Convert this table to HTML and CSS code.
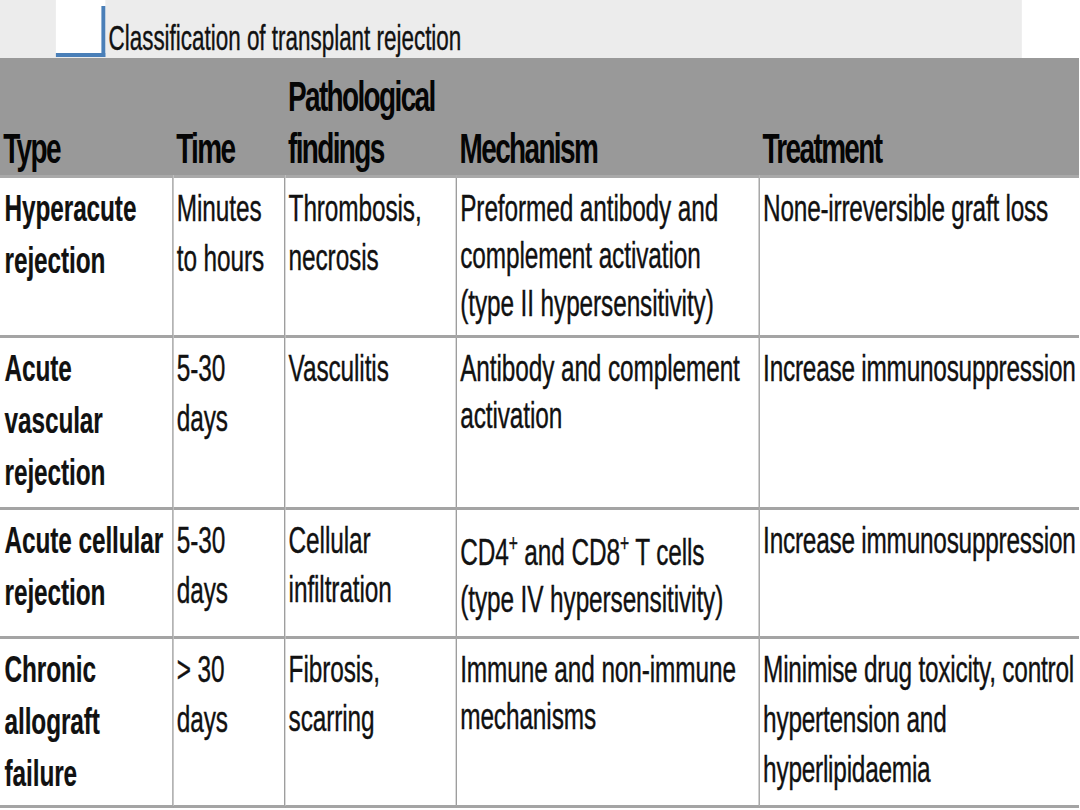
FILE: index.html
```html
<!DOCTYPE html>
<html lang="en">
<head>
<meta charset="utf-8">
<title>Classification of transplant rejection</title>
<link rel="stylesheet" href="styles.css">
</head>
<body>
<div class="page">
  <div class="topbar">
    <div class="tab"></div>
    <div class="title">Classification of transplant rejection</div>
  </div>
  <table class="grid">
    <colgroup>
      <col class="c-type"><col class="c-time"><col class="c-path"><col class="c-mech"><col class="c-treat">
    </colgroup>
    <thead>
      <tr class="head">
        <th>Type</th>
        <th>Time</th>
        <th>Pathological<br>findings</th>
        <th>Mechanism</th>
        <th>Treatment</th>
      </tr>
    </thead>
    <tbody>
      <tr class="r1">
        <td class="type">Hyperacute<br>rejection</td>
        <td class="time">Minutes<br>to hours</td>
        <td class="path">Thrombosis,<br>necrosis</td>
        <td class="mech">Preformed antibody and<br>complement activation<br>(type II hypersensitivity)</td>
        <td class="treat">None-irreversible graft loss</td>
      </tr>
      <tr class="r2">
        <td class="type">Acute<br>vascular<br>rejection</td>
        <td class="time">5-30<br>days</td>
        <td class="path">Vasculitis</td>
        <td class="mech">Antibody and complement<br>activation</td>
        <td class="treat">Increase immunosuppression</td>
      </tr>
      <tr class="r3">
        <td class="type">Acute cellular<br>rejection</td>
        <td class="time">5-30<br>days</td>
        <td class="path">Cellular<br>infiltration</td>
        <td class="mech cd">CD4<sup>+</sup> and CD8<sup>+</sup> T cells<br>(type IV hypersensitivity)</td>
        <td class="treat">Increase immunosuppression</td>
      </tr>
      <tr class="r4">
        <td class="type">Chronic<br>allograft<br>failure</td>
        <td class="time">&gt; 30<br>days</td>
        <td class="path">Fibrosis,<br>scarring</td>
        <td class="mech">Immune and non-immune<br>mechanisms</td>
        <td class="treat">Minimise drug toxicity, control<br>hypertension and<br>hyperlipidaemia</td>
      </tr>
    </tbody>
  </table>
</div>
</body>
</html>
```

FILE: styles.css
```css
html, body {
  margin: 0;
  padding: 0;
  background: #ffffff;
  overflow: hidden;
}

/* The slide appears horizontally squeezed. */
.page {
  width: 1660px;
  transform: scaleX(0.65);
  transform-origin: 0 0;
  font-family: "Liberation Sans", Arial, sans-serif;
  color: #111111;
}

.topbar {
  width: 1572px;
  height: 58px;
  background: #ececec;
  display: flex;
  align-items: flex-start;
}

.tab {
  margin-left: 86px;
  width: 76px;
  height: 53px;
  background: linear-gradient(#4a7fb8, #4a7fb8) right 0 top 6px / 6px 100% no-repeat, #ffffff;
  border-bottom: 4px solid #4a7fb8;
  flex: none;
}

.title {
  margin-left: 5px;
  font-size: 34.5px;
  line-height: 40px;
  padding-top: 18px;
  color: #111111;
  white-space: nowrap;
  -webkit-text-stroke: 0.4px #111111;
}

.grid {
  width: 1660px;
  border-collapse: collapse;
  table-layout: fixed;
  background: linear-gradient(#999999 0, #999999 117px, #ffffff 117px);
}

.c-type { width: 266px; }
.c-time { width: 172px; }
.c-path { width: 264px; }
.c-mech { width: 466px; }

.head {
  height: 118px;
}

.head th {
  text-align: left;
  vertical-align: bottom;
  font-weight: bold;
  font-size: 43px;
  line-height: 52px;
  letter-spacing: -2.5px;
  padding: 0 6px 1px 5px;
  color: #050505;
  border-bottom: 3px solid #a9a9a9;
}

.grid td {
  vertical-align: top;
  font-size: 37.5px;
  line-height: 47.5px;
  padding: 7px 4px 0 5px;
  white-space: nowrap;
  letter-spacing: -0.15px;
  border-left: 2px solid #9a9a9a;
  border-bottom: 3px solid #a4a4a4;
  -webkit-text-stroke: 0.4px #111111;
}

.grid td:first-child {
  border-left: none;
}

.grid td.type {
  font-weight: bold;
  line-height: 52px;
  padding-top: 4px;
  padding-left: 7px;
  -webkit-text-stroke: 0.2px #111111;
}

.grid td.time {
  line-height: 50px;
  padding-top: 5.5px;
}

.grid td.path {
  line-height: 49.5px;
  padding-top: 6px;
}

.grid td.treat {
  line-height: 50px;
  padding-top: 5.5px;
  letter-spacing: -0.35px;
}

.grid td.cd {
  padding-top: 19px;
}

.grid sup {
  font-size: 24px;
  line-height: 0;
  vertical-align: 14px;
}

.r1 { height: 160px; }
.r2 { height: 172px; }
.r3 { height: 129px; }
.r4 { height: 169px; }
```
